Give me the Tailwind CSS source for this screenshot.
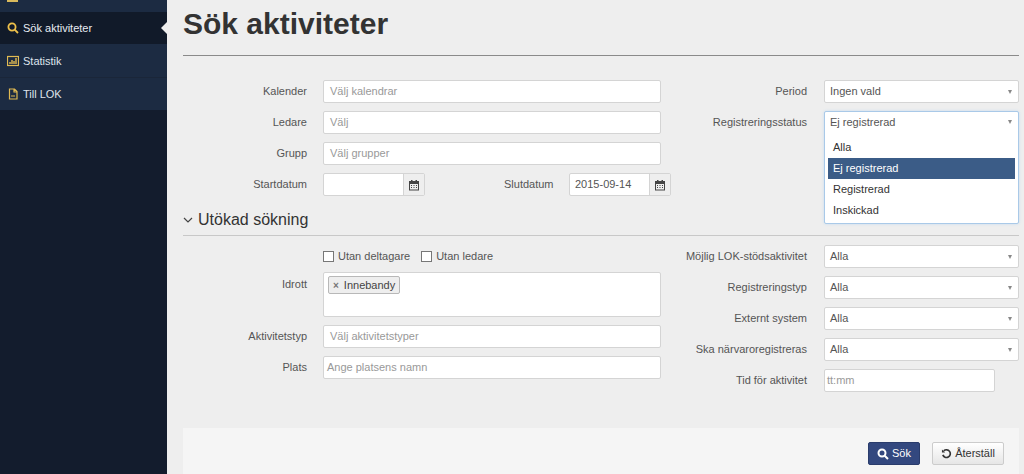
<!DOCTYPE html>
<html lang="sv">
<head>
  <meta charset="UTF-8" />
  <title>Sök aktiviteter</title>
  <script src="https://cdn.jsdelivr.net/npm/@tailwindcss/browser@4"></script>
</head>
<body class="bg-[#eeeeee] font-['Liberation_Sans',Arial,sans-serif] text-[#555] text-[11px] overflow-hidden">
  <div class="flex h-[474px] overflow-hidden">
    <!-- Sidebar -->
    <aside class="w-[167px] shrink-0 bg-[#131c2d]">
      <div class="h-[12px] bg-[#1c2b42] flex items-start pl-[7px]"><div class="w-[11px] h-[2px] bg-[#d9b95c]"></div></div>
      <a class="relative flex items-center gap-[4px] h-[32px] pl-[7px] bg-[#111a29] text-[#e8ecf2]">
        <svg class="w-[12px] h-[12px]" viewBox="0 0 12 12" fill="none" stroke="#eec04a" stroke-width="1.8"><circle cx="5" cy="5" r="3.6"/><path d="M7.7 7.7 11 11"/></svg>
        Sök aktiviteter
        <span class="absolute right-0 top-[10px] border-y-[6px] border-y-transparent border-r-[6px] border-r-[#eeeeee]"></span>
      </a>
      <a class="flex items-center gap-[4px] h-[34px] pt-[1px] pl-[7px] bg-[#1c2b42] border-b border-[#1a2639] text-[#dfe4ec]">
        <svg class="w-[12px] h-[12px]" viewBox="0 0 12 12" fill="none" stroke="#e0ba52"><rect x=".5" y="1.5" width="11" height="9" stroke-width="1.200"/><path d="M3 9V7M5 9V5M7 9V6M9 9V3" stroke-width="1.400"/></svg>
        Statistik
      </a>
      <a class="flex items-center gap-[4px] h-[32px] pl-[7px] bg-[#1c2b42] text-[#dfe4ec]">
        <svg class="w-[12px] h-[12px]" viewBox="0 0 12 12" fill="none" stroke="#e0ba52" stroke-width="1.200"><path d="M2.500 1h5l2.500 2.500V11h-7.500zM7 1v3h3M4 8h4"/></svg>
        Till LOK
      </a>
    </aside>

    <!-- Main content -->
    <main class="flex-1 pl-[16px] pr-[5px] min-w-0">
      <h1 class="h-[55px] pt-[6px] text-[30px] leading-[36px] font-bold text-[#333]">Sök aktiviteter</h1>
      <div class="border-t border-[#8a8a8a]"></div>

      <!-- Grundläggande sökning -->
      <section class="flex mt-[24px]">
        <div class="w-[478px] shrink-0 flex flex-col gap-[8px]">
          <div class="flex items-center h-[23px] gap-[16px]"><label class="w-[124px] text-right">Kalender</label><div class="flex-1 h-[23px] px-[6px] leading-[21px] bg-white border border-[#d4d4d4] rounded-[2px] text-[#999]">Välj kalendrar</div></div>
          <div class="flex items-center h-[23px] gap-[16px]"><label class="w-[124px] text-right">Ledare</label><div class="flex-1 h-[23px] px-[6px] leading-[21px] bg-white border border-[#d4d4d4] rounded-[2px] text-[#999]">Välj</div></div>
          <div class="flex items-center h-[23px] gap-[16px]"><label class="w-[124px] text-right">Grupp</label><div class="flex-1 h-[23px] px-[6px] leading-[21px] bg-white border border-[#d4d4d4] rounded-[2px] text-[#999]">Välj grupper</div></div>
          <div class="flex items-center h-[23px] whitespace-nowrap">
            <label class="w-[124px] shrink-0 text-right">Startdatum</label>
            <div class="ml-[16px] flex shrink-0 w-[102px] h-[23px] border border-[#d4d4d4] rounded-[2px] bg-white">
              <div class="flex-1"></div>
              <div class="w-[21px] flex items-center justify-center bg-[#eeeeee] border-l border-[#d4d4d4]">
                <svg class="w-[12px] h-[12px]" viewBox="0 0 12 12" fill="#444"><path d="M1 2h10v9.500H1zM2 5v5.500h8V5z"/><path d="M3 1h1.500v2H3zM7.500 1H9v2H7.500zM3 6h1v1H3zM5.500 6h1v1h-1zM8 6h1v1H8zM3 8h1v1H3zM5.500 8h1v1h-1zM8 8h1v1H8z"/></svg>
              </div>
            </div>
            <label class="ml-[79px] w-[50px] shrink-0">Slutdatum</label>
            <div class="ml-[15px] flex shrink-0 w-[102px] h-[23px] border border-[#d4d4d4] rounded-[2px] bg-white">
              <div class="flex-1 px-[5px] leading-[21px]">2015-09-14</div>
              <div class="w-[21px] flex items-center justify-center bg-[#eeeeee] border-l border-[#d4d4d4]">
                <svg class="w-[12px] h-[12px]" viewBox="0 0 12 12" fill="#444"><path d="M1 2h10v9.500H1zM2 5v5.500h8V5z"/><path d="M3 1h1.500v2H3zM7.500 1H9v2H7.500zM3 6h1v1H3zM5.500 6h1v1h-1zM8 6h1v1H8zM3 8h1v1H3zM5.500 8h1v1h-1zM8 8h1v1H8z"/></svg>
              </div>
            </div>
          </div>
        </div>
        <div class="flex-1 flex flex-col gap-[8px]">
          <div class="flex items-center h-[23px] gap-[17px]"><label class="w-[146px] text-right">Period</label><div class="relative flex-1 h-[23px] px-[5px] leading-[21px] bg-white border border-[#d4d4d4] rounded-[2px]">Ingen vald<span class="absolute right-[6px] top-[9px] border-x-[2.5px] border-x-transparent border-t-[4px] border-t-[#888]"></span></div></div>
          <div class="flex items-center h-[23px] gap-[17px]"><label class="w-[146px] text-right">Registreringsstatus</label>
            <div class="relative flex-1 h-[23px]">
              <!-- Öppen lista -->
              <div class="absolute inset-x-0 top-0 h-[113px] bg-white border border-[#a9c9e8] rounded-[2px] shadow-[0_0_3px_#c4dbf0] z-10">
                <div class="relative h-[22px] px-[5px] leading-[20px]">Ej registrerad<span class="absolute right-[6px] top-[8px] border-x-[2.5px] border-x-transparent border-t-[4px] border-t-[#888]"></span></div>
                <ul class="px-[3px] pt-[3px] text-[#333]">
                  <li class="h-[21px] px-[5px] leading-[21px]">Alla</li>
                  <li class="h-[21px] px-[5px] leading-[21px] bg-[#3b5c87] text-white">Ej registrerad</li>
                  <li class="h-[21px] px-[5px] leading-[21px]">Registrerad</li>
                  <li class="h-[21px] px-[5px] leading-[21px]">Inskickad</li>
                </ul>
              </div>
            </div>
          </div>
        </div>
      </section>

      <!-- Utökad sökning -->
      <div class="flex items-center gap-[5px] mt-[11px] h-[29px] pb-[2px] border-b border-[#c8c8c8] text-[#333] text-[16px]">
        <svg class="w-[10px] h-[10px]" viewBox="0 0 10 10" fill="none" stroke="#444" stroke-width="1.200"><path d="M1 3l4 4 4-4"/></svg>
        Utökad sökning
      </div>
      <section class="flex mt-[9px]">
        <div class="w-[478px] shrink-0 flex flex-col pt-[1px]">
          <div class="flex items-center h-[20px] pl-[140px] gap-[4px]">
            <span class="w-[11px] h-[11px] border border-[#777] bg-white"></span><span class="mr-[7px]">Utan deltagare</span>
            <span class="w-[11px] h-[11px] border border-[#777] bg-white"></span><span>Utan ledare</span>
          </div>
          <div class="flex gap-[16px] mt-[6px]">
            <label class="w-[124px] text-right pt-[4px]">Idrott</label>
            <div class="flex-1 h-[45px] p-[3px] pl-[4px] bg-white border border-[#d4d4d4] rounded-[2px]">
              <span class="inline-flex items-center gap-[5px] h-[18px] px-[4px] bg-[#eeeeee] border border-[#b8b8b8] rounded-[2px] text-[#444]"><span class="text-[#777] font-bold text-[10px]">×</span>Innebandy</span>
            </div>
          </div>
          <div class="flex items-center gap-[16px] mt-[8px]"><label class="w-[124px] text-right">Aktivitetstyp</label><div class="flex-1 h-[23px] px-[6px] leading-[21px] bg-white border border-[#d4d4d4] rounded-[2px] text-[#999]">Välj aktivitetstyper</div></div>
          <div class="flex items-center gap-[16px] mt-[8px]"><label class="w-[124px] text-right">Plats</label><div class="flex-1 h-[23px] px-[3px] leading-[21px] bg-white border border-[#d4d4d4] rounded-[2px] text-[#999]">Ange platsens namn</div></div>
        </div>
        <div class="flex-1 flex flex-col gap-[8px]">
          <div class="flex items-center h-[23px] gap-[17px]"><label class="w-[146px] text-right whitespace-nowrap">Möjlig LOK-stödsaktivitet</label><div class="relative flex-1 h-[23px] px-[5px] leading-[21px] bg-white border border-[#d4d4d4] rounded-[2px]">Alla<span class="absolute right-[6px] top-[9px] border-x-[2.5px] border-x-transparent border-t-[4px] border-t-[#888]"></span></div></div>
          <div class="flex items-center h-[23px] gap-[17px]"><label class="w-[146px] text-right">Registreringstyp</label><div class="relative flex-1 h-[23px] px-[5px] leading-[21px] bg-white border border-[#d4d4d4] rounded-[2px]">Alla<span class="absolute right-[6px] top-[9px] border-x-[2.5px] border-x-transparent border-t-[4px] border-t-[#888]"></span></div></div>
          <div class="flex items-center h-[23px] gap-[17px]"><label class="w-[146px] text-right">Externt system</label><div class="relative flex-1 h-[23px] px-[5px] leading-[21px] bg-white border border-[#d4d4d4] rounded-[2px]">Alla<span class="absolute right-[6px] top-[9px] border-x-[2.5px] border-x-transparent border-t-[4px] border-t-[#888]"></span></div></div>
          <div class="flex items-center h-[23px] gap-[17px]"><label class="w-[146px] text-right">Ska närvaroregistreras</label><div class="relative flex-1 h-[23px] px-[5px] leading-[21px] bg-white border border-[#d4d4d4] rounded-[2px]">Alla<span class="absolute right-[6px] top-[9px] border-x-[2.5px] border-x-transparent border-t-[4px] border-t-[#888]"></span></div></div>
          <div class="flex items-center h-[23px] gap-[17px]"><label class="w-[146px] text-right">Tid för aktivitet</label><div class="w-[171px] h-[23px] px-[2px] leading-[21px] bg-white border border-[#d4d4d4] rounded-[2px] text-[#999]">tt:mm</div></div>
        </div>
      </section>

      <!-- Knappar -->
      <footer class="mt-[36px] h-[60px] bg-[#f5f5f5] flex items-start justify-end gap-[12px] pt-[14px] pr-[15px]">
        <button class="flex items-center justify-center gap-[3px] w-[52px] h-[23px] bg-[#33487f] border border-[#2a3c6c] rounded-[2px] text-white">
          <svg class="w-[12px] h-[12px]" viewBox="0 0 12 12" fill="none" stroke="#fff" stroke-width="2"><circle cx="5" cy="5" r="3.500"/><path d="M7.700 7.700 11 11"/></svg>
          Sök
        </button>
        <button class="flex items-center justify-center gap-[3px] w-[72px] h-[23px] bg-gradient-to-b from-white to-[#e6e6e6] border border-[#cccccc] rounded-[2px] text-[#333]">
          <svg class="w-[11px] h-[11px]" viewBox="0 0 12 12" fill="none" stroke="#333" stroke-width="1.800"><path d="M3 3.200A4.200 4.200 0 1 1 2 7.500"/><path d="M1 1.500v3.500h3.500" fill="#333" stroke="none"/></svg>
          Återställ
        </button>
      </footer>
    </main>
  </div>
</body>
</html>
